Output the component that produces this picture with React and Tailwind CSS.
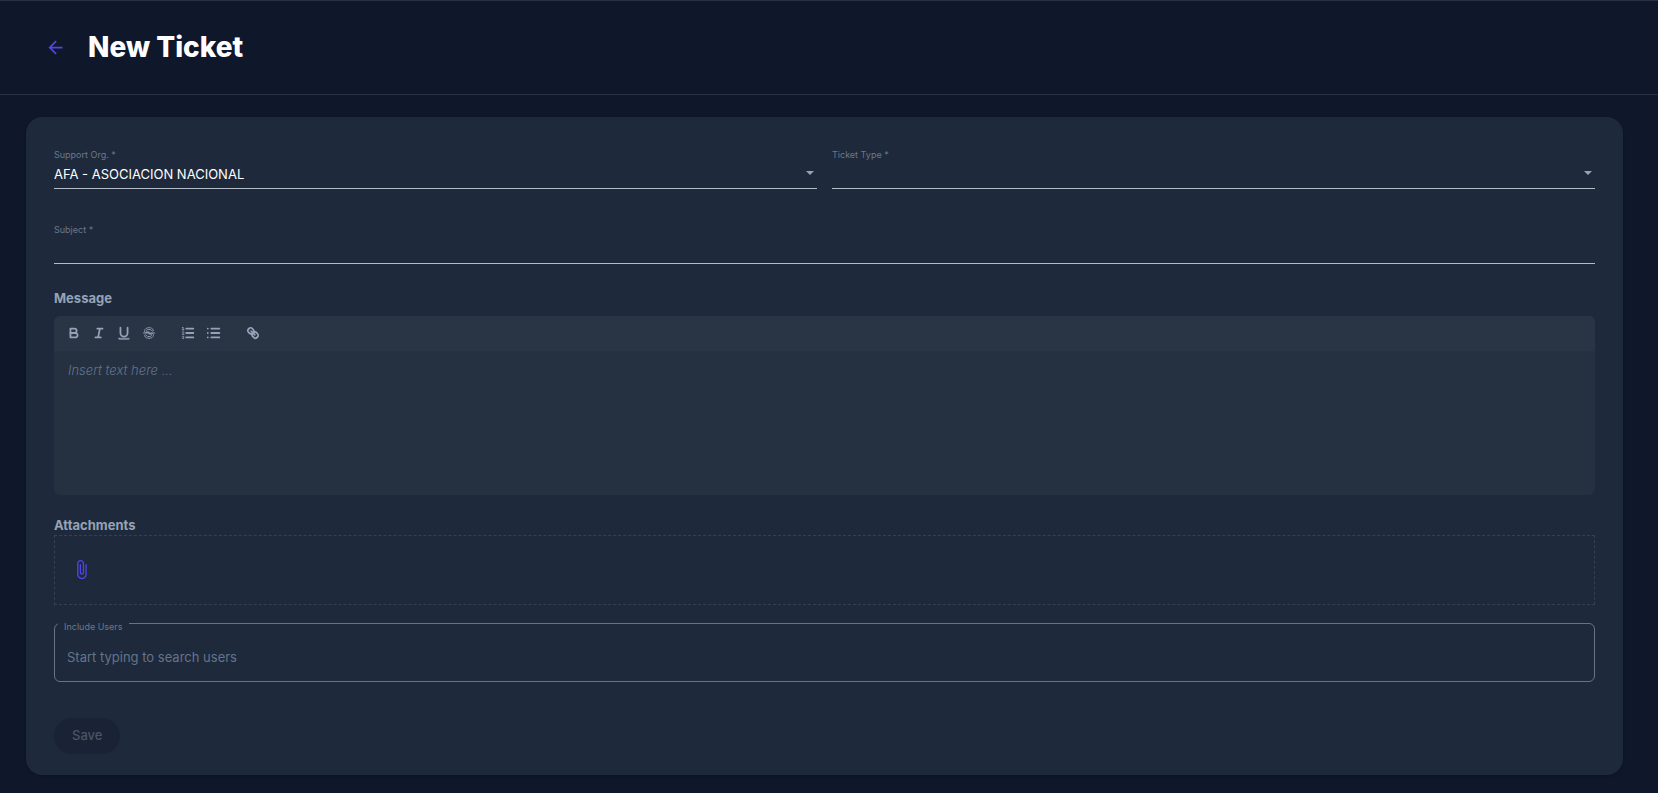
import { useState } from 'react';
import { MdArrowBack, MdAttachFile } from 'react-icons/md';

const labelClass = "block text-[9px] leading-3 text-[#6b788c]";
const sectionClass = "block text-[13px] leading-5 font-bold text-[#94a3b8]";

function ToolButton({ label, children }) {
  return (
    <button type="button" aria-label={label} className="flex h-6 w-[25px] items-center justify-center text-[#94a3b8] hover:text-white">
      <svg viewBox="0 0 18 18" className="size-4" fill="none" stroke="currentColor" strokeWidth="2" strokeLinecap="round" strokeLinejoin="round">
        {children}
      </svg>
    </button>
  );
}

function SelectField({ id, label, options, value, onChange }) {
  return (
    <div>
      <label htmlFor={id} className={labelClass}>{label} *</label>
      <div className="relative">
        <select
          id={id}
          value={value}
          onChange={(e) => onChange(e.target.value)}
          className="block h-7 w-full appearance-none border-b border-[#b4bcc8] bg-transparent pr-6 text-[13px] text-white outline-none"
        >
          {options.map((o) => <option key={o} value={o} className="bg-[#1e293b]">{o}</option>)}
        </select>
        <svg viewBox="0 0 8 4" className="pointer-events-none absolute top-2.5 right-[3px] h-1 w-2 fill-[#94a3b8]">
          <path d="M0 0h8L4 4z" />
        </svg>
      </div>
    </div>
  );
}

function Toolbar() {
  return (
    <div className="flex h-[35px] items-center gap-3.5 bg-[#293445] px-[7px] pb-0.5">
      <div className="flex">
        <ToolButton label="Bold">
          <path d="M5,4H9.5A2.5,2.5,0,0,1,12,6.5v0A2.5,2.5,0,0,1,9.5,9H5V4Z" />
          <path d="M5,9h5.5A2.5,2.5,0,0,1,13,11.5v0A2.5,2.5,0,0,1,10.5,14H5V9Z" />
        </ToolButton>
        <ToolButton label="Italic">
          <path d="M7,4H13M5,14H11M8,14L10,4" />
        </ToolButton>
        <ToolButton label="Underline">
          <path d="M5,3V9a4.012,4.012,0,0,0,4,4H9a4.012,4.012,0,0,0,4-4V3" />
          <rect x="3" y="15" width="12" height="1" rx="0.5" strokeWidth="1" />
        </ToolButton>
        <ToolButton label="Strike">
          <g strokeWidth="1">
            <path d="M15.5,9H2.5" />
            <path d="M9.007,8C6.542,7.791,6,7.519,6,6.5,6,5.792,7.283,5,9,5c1.571,0,2.765.679,2.969,1.309a1,1,0,0,0,1.9-.617C13.356,4.106,11.354,3,9,3,6.2,3,4,4.538,4,6.5a3.2,3.2,0,0,0,.5,1.843Z" />
            <path d="M8.984,10C11.457,10.208,12,10.479,12,11.5c0,.708-1.283,1.5-3,1.5-1.571,0-2.765-.679-2.969-1.309a1,1,0,1,0-1.9.617C4.646,13.894,6.646,15,9,15c2.8,0,5-1.538,5-3.5a3.2,3.2,0,0,0-.5-1.843Z" />
          </g>
        </ToolButton>
      </div>
      <div className="flex gap-px">
        <ToolButton label="Ordered list">
          <path d="M7,4H15M7,9H15M7,14H15" />
          <g strokeWidth="1">
            <path d="M2.5,5.5H4.5M3.5,5.5V2.5L2.5,3" />
            <path d="M4.5,10.5h-2c0-.234,1.85-1.076,1.85-2.234A0.959,0.959,0,0,0,2.5,8.156" />
            <path d="M2.5,14.846a0.959,0.959,0,0,0,1.85-.109A0.7,0.7,0,0,0,3.75,14a0.688,0.688,0,0,0,.6-0.736,0.959,0.959,0,0,0-1.85-.109" />
          </g>
        </ToolButton>
        <ToolButton label="Bullet list">
          <path d="M6,4H15M6,9H15M6,14H15M2,4H2.01M2,9H2.01M2,14H2.01" />
        </ToolButton>
      </div>
      <ToolButton label="Link">
        <path d="M7,7L11,11" />
        <path d="M8.9,4.577a3.476,3.476,0,0,1,.36,4.679A3.476,3.476,0,0,1,4.577,8.9C3.185,7.5,2.035,6.4,4.217,4.217S7.5,3.185,8.9,4.577Z" />
        <path d="M13.423,9.1a3.476,3.476,0,0,0-4.679-.36,3.476,3.476,0,0,0,.36,4.679c1.392,1.392,2.5,2.542,4.679.36S14.815,10.5,13.423,9.1Z" />
      </ToolButton>
    </div>
  );
}

export default function App() {
  const [org, setOrg] = useState('AFA - ASOCIACION NACIONAL');
  const [type, setType] = useState('');

  return (
    <div className="min-h-screen bg-[#0f172a] font-['Inter',sans-serif] text-white">
      <header className="flex items-center gap-[22px] border-y border-[#273244] py-6 pl-[45px]">
        <button type="button" aria-label="Back" className="text-[#4f46e5] hover:text-indigo-400">
          <MdArrowBack size={21} />
        </button>
        <h1 className="text-[28px] leading-[45px] font-extrabold">New Ticket</h1>
      </header>

      <main className="pt-[22px] pr-[35px] pb-[18px] pl-[26px]">
        <form className="rounded-2xl bg-[#1e293b] px-7 pt-8 pb-[21px] shadow">
          <div className="grid grid-cols-2 gap-[15px]">
            <SelectField id="org" label="Support Org." options={['AFA - ASOCIACION NACIONAL']} value={org} onChange={setOrg} />
            <SelectField id="type" label="Ticket Type" options={['']} value={type} onChange={setType} />
          </div>

          <div className="mt-[35px]">
            <label htmlFor="subject" className={labelClass}>Subject *</label>
            <input id="subject" type="text" className="block h-7 w-full border-b border-[#b4bcc8] bg-transparent text-[13px] outline-none" />
          </div>

          {/* Message editor */}
          <div className="mt-6">
            <label htmlFor="message" className={sectionClass}>Message</label>
            <div className="mt-2 overflow-hidden rounded-md bg-[#253041]">
              <Toolbar />
              <textarea
                id="message"
                placeholder="Insert text here ..."
                className="block h-36 w-full resize-none bg-transparent px-3.5 py-[9px] text-[13px] leading-5 font-light outline-none placeholder:text-[#64748b] placeholder:italic"
              />
            </div>
          </div>

          <div className="mt-5">
            <h2 className={sectionClass}>Attachments</h2>
            <div className="flex h-[70px] items-center border border-dashed border-[#334155] px-4 pb-0.5">
              <button type="button" aria-label="Attach file" className="text-[#4f46e5] hover:text-indigo-400">
                <MdAttachFile size={21} />
              </button>
            </div>
          </div>

          <div className="relative mt-[18px]">
            <label htmlFor="users" className="absolute -top-0.5 left-1 bg-[#1e293b] px-1.5 text-[9px] leading-3 text-[#6b788c]">Include Users</label>
            <input
              id="users"
              type="text"
              placeholder="Start typing to search users"
              className="block h-[59px] w-full rounded-md border border-[#64748b] bg-transparent px-3 pt-2 text-[13px] outline-none placeholder:text-[#64748b]"
            />
          </div>

          <button type="submit" disabled className="mt-9 block h-9 rounded-full bg-[#1a2335] px-[18px] text-[13px] font-medium text-[#475569]">
            Save
          </button>
        </form>
      </main>
    </div>
  );
}
